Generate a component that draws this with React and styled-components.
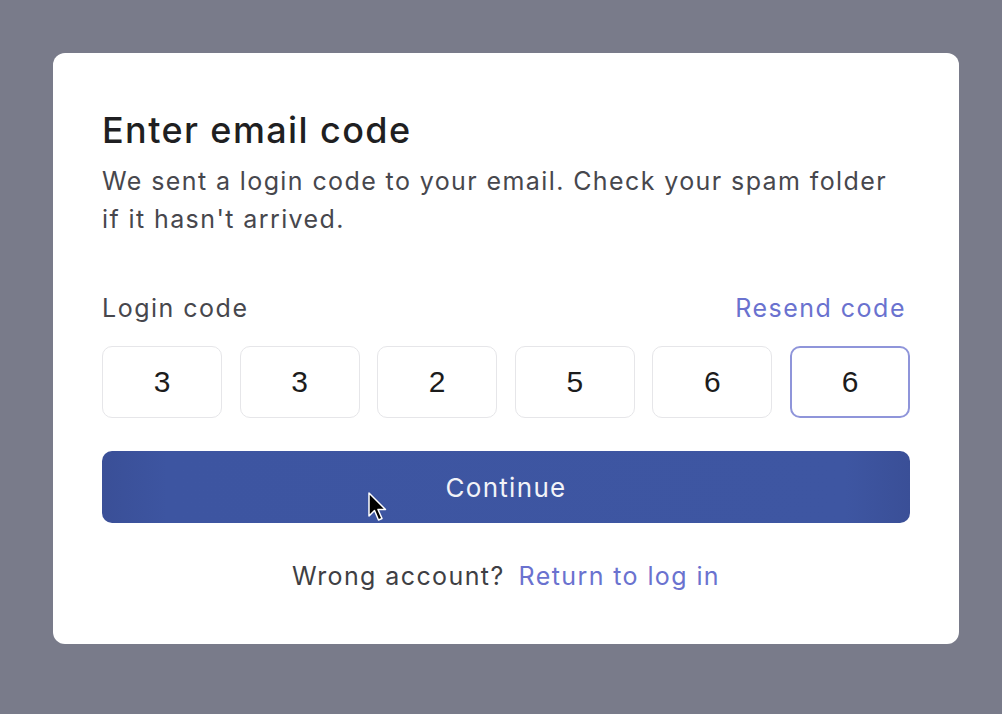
import React from "react";
import styled, { createGlobalStyle } from "styled-components";

const Global = createGlobalStyle`
  html, body { margin: 0; padding: 0; }
  body {
    background: #797b8a;
    font-family: Inter, "Noto Sans", sans-serif;
    -webkit-font-smoothing: antialiased;
  }
`;

const Page = styled.div`
  width: 1002px;
  height: 714px;
  box-sizing: border-box;
  padding: 53px 43px 70px 53px;
  background: #797b8a;
`;

const Card = styled.div`
  width: 906px;
  height: 591px;
  box-sizing: border-box;
  background: #ffffff;
  border-radius: 12px;
  padding: 56px 49px 0 49px;
  display: flex;
  flex-direction: column;
`;

const Title = styled.h1`
  margin: 0;
  font-family: Inter, sans-serif;
  font-size: 36px;
  line-height: 42px;
  font-weight: 500;
  color: #1f1f22;
  letter-spacing: 1.4px;
`;

const Subtitle = styled.p`
  margin: 11px 0 0 0;
  font-size: 25px;
  line-height: 38px;
  color: #47474d;
  font-weight: 400;
  letter-spacing: 1.4px;
`;

const LabelRow = styled.div`
  margin-top: 55px;
  display: flex;
  justify-content: space-between;
  align-items: baseline;
  font-size: 25px;
  line-height: 30px;
  letter-spacing: 1.5px;
`;

const Label = styled.span`
  color: #47474d;
`;

const Link = styled.a`
  color: #6a72cf;
  text-decoration: none;
  cursor: pointer;
  margin-right: ${(p) => (p.$inset ? "4px" : "0")};
`;

const Digits = styled.div`
  margin-top: 23px;
  display: grid;
  grid-template-columns: repeat(6, 1fr);
  gap: 17.6px;
`;

const DigitBox = styled.div`
  height: 72px;
  box-sizing: border-box;
  border: ${(p) => (p.$active ? "2px solid #8f95da" : "1.5px solid #e6e6e9")};
  border-radius: 10px;
  display: flex;
  align-items: center;
  justify-content: center;
  font-family: "Liberation Sans", Arial, sans-serif;
  font-size: 30px;
  color: #1c1c1c;
  background: #fff;
`;

const ButtonWrap = styled.div`
  position: relative;
  margin-top: 33px;
`;

const Button = styled.button`
  display: block;
  width: 100%;
  height: 72px;
  border: none;
  border-radius: 10px;
  background: linear-gradient(90deg, #3a4f97 0%, #3d55a1 8%, #3e56a2 92%, #3a4f97 100%);
  color: #f2f3f8;
  font-family: Inter, sans-serif;
  font-size: 26px;
  font-weight: 400;
  letter-spacing: 1.3px;
  cursor: pointer;
`;

const Cursor = styled.svg`
  position: absolute;
  left: 266px;
  top: 41px;
  pointer-events: none;
`;

const Footer = styled.div`
  margin-top: 38px;
  display: flex;
  justify-content: center;
  gap: 14px;
  font-size: 25px;
  line-height: 30px;
  letter-spacing: 1.4px;
`;

const Muted = styled.span`
  color: #3f3f44;
`;

export default function App() {
  const code = ["3", "3", "2", "5", "6", "6"];
  return (
    <>
      <Global />
      <Page>
        <Card>
          <Title>Enter email code</Title>
          <Subtitle>
            We sent a login code to your email. Check your spam folder
            <br />
            if it hasn't arrived.
          </Subtitle>
          <LabelRow>
            <Label>Login code</Label>
            <Link $inset>Resend code</Link>
          </LabelRow>
          <Digits>
            {code.map((d, i) => (
              <DigitBox key={i} $active={i === code.length - 1}>
                {d}
              </DigitBox>
            ))}
          </Digits>
          <ButtonWrap>
            <Button>Continue</Button>
            <Cursor width="22" height="34" viewBox="0 0 22 34">
              <path
                d="M1 1 L1 24 L6.5 18.5 L10.5 28 L14 26.5 L10 17.5 L17.5 17.5 Z"
                fill="#000"
                stroke="#fff"
                strokeWidth="1.5"
                strokeLinejoin="round"
              />
            </Cursor>
          </ButtonWrap>
          <Footer>
            <Muted>Wrong account?</Muted>
            <Link>Return to log in</Link>
          </Footer>
        </Card>
      </Page>
    </>
  );
}
